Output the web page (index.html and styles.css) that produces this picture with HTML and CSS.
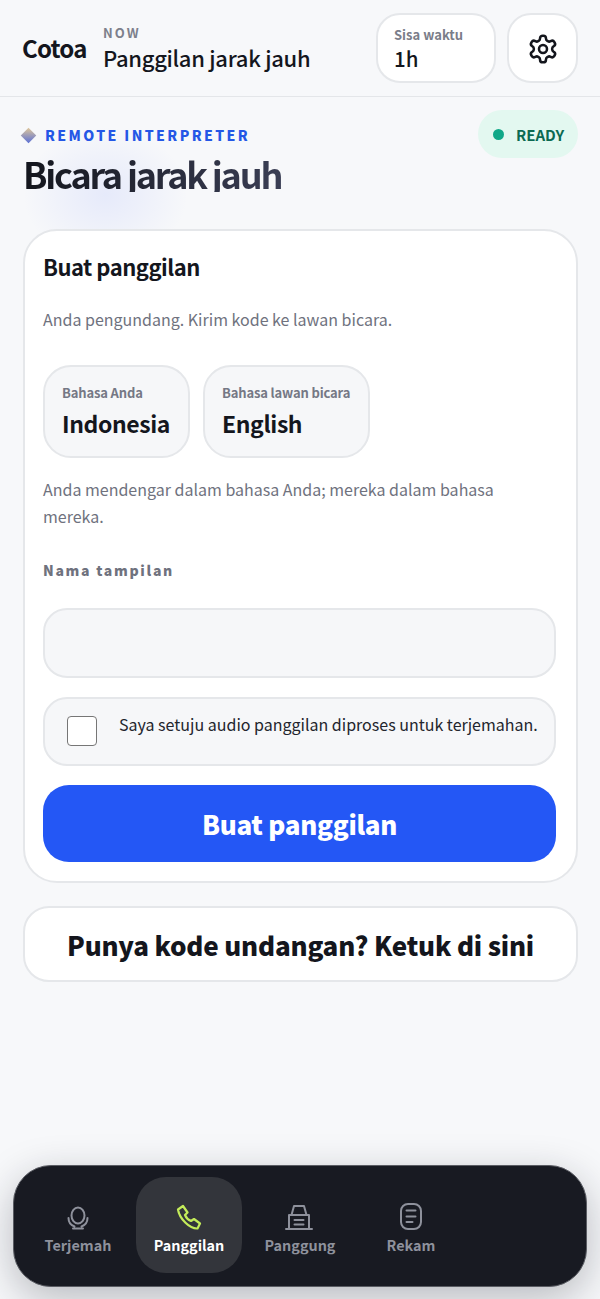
FILE: index.html
```html
<!DOCTYPE html>
<html lang="id">
<head>
<meta charset="utf-8">
<title>Cotoa</title>
<link rel="stylesheet" href="styles.css">
</head>
<body>
<div class="app">
  <header class="topbar">
    <div class="brand">Cotoa</div>
    <div class="now">
      <div class="now-label">NOW</div>
      <div class="now-title">Panggilan jarak jauh</div>
    </div>
    <div class="time-chip">
      <div class="time-label">Sisa waktu</div>
      <div class="time-value">1h</div>
    </div>
    <button class="settings" aria-label="Pengaturan">
      <svg width="32" height="32" viewBox="0 0 24 24" fill="none" stroke="#14161d" stroke-width="1.900" stroke-linecap="round" stroke-linejoin="round"><path d="M12.22 2h-.44a2 2 0 0 0-2 2v.18a2 2 0 0 1-1 1.73l-.43.25a2 2 0 0 1-2 0l-.15-.08a2 2 0 0 0-2.73.73l-.22.38a2 2 0 0 0 .73 2.73l.15.1a2 2 0 0 1 1 1.72v.51a2 2 0 0 1-1 1.74l-.15.09a2 2 0 0 0-.73 2.73l.22.38a2 2 0 0 0 2.73.73l.15-.08a2 2 0 0 1 2 0l.43.25a2 2 0 0 1 1 1.73V20a2 2 0 0 0 2 2h.44a2 2 0 0 0 2-2v-.18a2 2 0 0 1 1-1.73l.43-.25a2 2 0 0 1 2 0l.15.08a2 2 0 0 0 2.73-.73l.22-.39a2 2 0 0 0-.73-2.73l-.15-.08a2 2 0 0 1-1-1.74v-.5a2 2 0 0 1 1-1.74l.15-.09a2 2 0 0 0 .73-2.73l-.22-.38a2 2 0 0 0-2.73-.73l-.15.08a2 2 0 0 1-2 0l-.43-.25a2 2 0 0 1-1-1.73V4a2 2 0 0 0-2-2z"/><circle cx="12" cy="12" r="3"/></svg>
    </button>
  </header>

  <main class="content">
    <section class="hero">
      <div class="hero-text">
        <div class="eyebrow"><span class="diamond"></span>REMOTE INTERPRETER</div>
        <h1 class="headline">Bicara jarak jauh</h1>
      </div>
      <div class="ready"><span class="dot"></span>READY</div>
    </section>

    <section class="card">
      <h2 class="card-title">Buat panggilan</h2>
      <p class="muted intro">Anda pengundang. Kirim kode ke lawan bicara.</p>
      <div class="langs">
        <div class="lang"><div class="lang-label">Bahasa Anda</div><div class="lang-value">Indonesia</div></div>
        <div class="lang"><div class="lang-label">Bahasa lawan bicara</div><div class="lang-value">English</div></div>
      </div>
      <p class="muted note">Anda mendengar dalam bahasa Anda; mereka dalam bahasa mereka.</p>
      <label class="field-label" for="name">Nama tampilan</label>
      <input class="field" id="name" type="text">
      <div class="consent">
        <span class="check"></span>
        <span class="consent-text">Saya setuju audio panggilan diproses untuk terjemahan.</span>
      </div>
      <button class="primary">Buat panggilan</button>
    </section>

    <button class="invite">Punya kode undangan? Ketuk di sini</button>
  </main>

  <nav class="dock">
    <div class="tab">
      <svg width="26" height="26" viewBox="0 0 26 26" fill="none" stroke="#8e919c" stroke-width="2" stroke-linecap="round" stroke-linejoin="round"><ellipse cx="13" cy="11.500" rx="6.500" ry="8"/><path d="M3.500 14c0 4 2 7 6 8.500M22.500 14c0 4-2 7-6 8.500M8 24.500h10"/></svg>
      <span class="tab-label">Terjemah</span>
    </div>
    <div class="tab active">
      <svg width="26" height="26" viewBox="0 0 26 26" fill="none" stroke="#c4ec5a" stroke-width="2.200" stroke-linecap="round" stroke-linejoin="round"><path d="M2 5.500L7 2l4.500 6.500-2.500 2.500c1 2.500 3.500 5 6 6l3-2 6 4.500-2.500 5C14 25 3.500 15 2 5.500z"/></svg>
      <span class="tab-label">Panggilan</span>
    </div>
    <div class="tab">
      <svg class="stage-icon" width="30" height="26" viewBox="0 0 30 26" fill="none" stroke="#8e919c" stroke-width="2" stroke-linecap="round" stroke-linejoin="round"><path d="M2 25h26M5 25V11h20v14M7.500 11L10 2h10l2.500 9M10.500 16h9M10.500 20.500h9"/></svg>
      <span class="tab-label">Panggung</span>
    </div>
    <div class="tab">
      <svg width="24" height="28" viewBox="0 0 24 28" fill="none" stroke="#8e919c" stroke-width="2" stroke-linecap="round" stroke-linejoin="round"><rect x="2" y="2" width="20" height="25" rx="7"/><path d="M7.500 8.500h9M7.500 14.500h9M7.500 20h6"/></svg>
      <span class="tab-label">Rekam</span>
    </div>
  </nav>
</div>
</body>
</html>
```

FILE: styles.css
```css
* { box-sizing: border-box; }
html, body { margin: 0; padding: 0; }
body {
  background: #f7f8fa;
  color: #14161d;
  font-family: "Noto Sans CJK SC", "Noto Sans", sans-serif;
}
button, input { font-family: inherit; }
.app { position: relative; width: 600px; height: 1299px; overflow: hidden; }

.topbar {
  display: flex;
  align-items: center;
  height: 97px;
  padding: 0 22px 1px 23px;
  border-bottom: 1px solid #e4e6e9;
}
.brand { font-size: 24px; font-weight: 600; letter-spacing: -0.800px; line-height: 1; width: 80px; margin-top: 1px; margin-left: -1px; margin-right: 1px; }
.now { flex: 1; padding-top: 2px; }
.now-label { font-size: 13px; line-height: 16px; font-weight: 700; letter-spacing: 2px; color: #7d808c; }
.now-title { font-size: 22px; line-height: 32px; font-weight: 500; letter-spacing: -0.300px; }
.time-chip {
  width: 120px; height: 70px; padding: 11px 16px;
  background: #fff; border: 2px solid #e5e7ea; border-radius: 24px;
}
.time-label { font-size: 13px; line-height: 18px; font-weight: 600; color: #7a7d89; }
.time-value { font-size: 20.500px; line-height: 28px; font-weight: 500; }
.settings {
  width: 71px; height: 70px; margin-left: 11px; padding: 2px 0 0;
  display: flex; align-items: center; justify-content: center;
  background: #fff; border: 2px solid #e5e7ea; border-radius: 24px;
}

.content { padding: 0 22px 0 23px; }
.hero { position: relative; display: flex; justify-content: space-between; height: 132px; padding-top: 13px; }
.hero::before {
  content: ""; position: absolute; left: 0; top: 30px; width: 165px; height: 135px;
  background: radial-gradient(closest-side, rgba(80, 110, 255, 0.10), rgba(80, 110, 255, 0));
}
.hero-text { position: relative; padding-top: 13px; }
.eyebrow {
  display: flex; align-items: center; height: 24px; margin-left: -3px;
  font-size: 14px; font-weight: 900; letter-spacing: 2.400px; color: #2457e6;
}
.diamond {
  width: 11px; height: 11px; margin: 0 11px 0 3px; transform: rotate(45deg);
  background: linear-gradient(135deg, #e0c79a, #5a70d6);
}
.headline {
  margin: 7px 0 0; height: 38px; overflow: hidden;
  font-size: 36px; line-height: 38px; font-weight: 700; letter-spacing: -2.200px;
  background: linear-gradient(90deg, #14161d, #3a3e54);
  -webkit-background-clip: text; background-clip: text; color: transparent;
}
.ready {
  position: relative; display: flex; align-items: center; gap: 12px;
  width: 100px; height: 48px; padding-left: 15px; border-radius: 24px;
  background: #e3f8f0; color: #0c6a52;
  font-size: 15px; font-weight: 700;
}
.dot { width: 11px; height: 11px; border-radius: 50%; background: #0fa888; }

.card {
  position: relative;
  height: 654px; padding: 19px 20px 0 18px;
  background: #fff; border: 2px solid #e5e7ea; border-radius: 34px;
}
.card-title { margin: 0; font-size: 22px; line-height: 32px; font-weight: 600; letter-spacing: -0.500px; }
.muted { margin: 0; color: #6f727e; font-size: 16px; line-height: 27px; }
.intro { margin-top: 24px; }
.langs { display: flex; gap: 13px; margin-top: 32px; }
.lang {
  height: 93px; padding: 16px 18px 0 17px;
  background: #f6f7f9; border: 2px solid #e5e7ea; border-radius: 28px;
}
.lang-label { font-size: 13px; line-height: 20px; font-weight: 600; letter-spacing: -0.150px; color: #757885; }
.lang-value { margin-top: 3px; font-size: 23px; line-height: 34px; font-weight: 600; letter-spacing: -0.400px; }
.note { margin-top: 18px; }
.field-label {
  display: block; margin-top: 30px;
  font-size: 14px; line-height: 20px; font-weight: 900; letter-spacing: 1.700px; color: #6f727e;
}
.field {
  display: block; width: 100%; height: 70px; margin-top: 28px;
  background: #f6f7f9; border: 2px solid #e5e7ea; border-radius: 24px;
}
.consent {
  display: flex; align-items: flex-start; height: 69px; margin-top: 19px; padding: 14px 16px 0 22px;
  background: #f6f7f9; border: 2px solid #e5e7ea; border-radius: 24px;
}
.check {
  flex: none; width: 30px; height: 30px; margin: 3px 22px 0 0;
  background: #fff; border: 1.500px solid #767676; border-radius: 4px;
}
.consent-text { font-size: 16px; line-height: 22px; color: #23252d; white-space: nowrap; }
.primary {
  display: block; width: 100%; height: 77px; margin-top: 19px;
  border: 0; border-radius: 26px; background: #2457f5; color: #fff;
  font-size: 26px; font-weight: 900; letter-spacing: -0.300px;
}
.invite {
  display: block; width: 100%; height: 76px; margin-top: 23px;
  background: #fff; border: 2px solid #e5e7ea; border-radius: 26px; color: #14161d;
  font-size: 26px; font-weight: 900; letter-spacing: -0.200px;
}

.dock {
  position: absolute; left: 13px; top: 1165px; width: 574px; height: 122px;
  display: grid; grid-template-columns: repeat(5, 1fr); column-gap: 5px;
  padding: 11px 11px 13px;
  background: #181a22; border: 1px solid #5a5c63; border-radius: 38px;
  box-shadow: 0 12px 40px rgba(20, 24, 40, 0.28);
}
.tab {
  display: flex; flex-direction: column; align-items: center; justify-content: flex-end;
  gap: 5px; padding-bottom: 18px;
  border-radius: 30px; color: #8e919c;
}
.tab.active { background: #33353b; color: #fff; }
.tab-label { font-size: 14.400px; line-height: 20px; font-weight: 700; }
.stage-icon { margin-right: 2px; }
```
